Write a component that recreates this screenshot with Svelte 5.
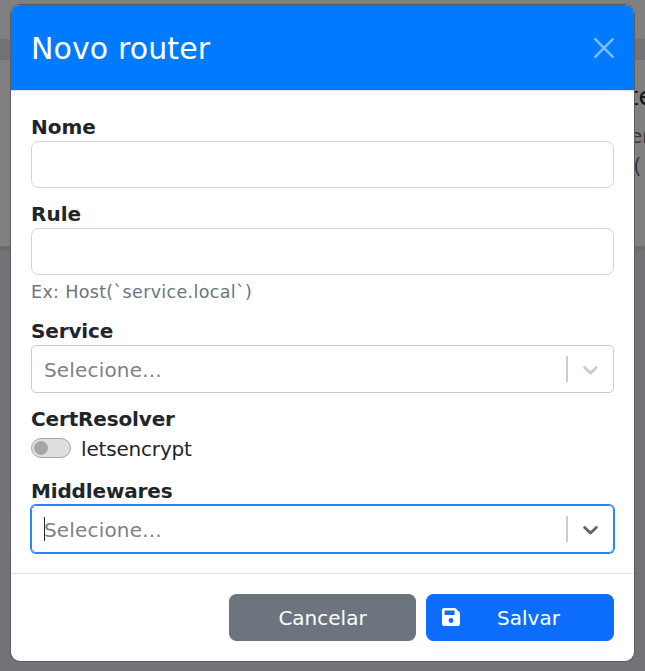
<script>
  let nome = $state('');
  let rule = $state('');
</script>

{#snippet chevron()}
  <svg class="chevron" width="25" height="25" viewBox="0 0 20 20" aria-hidden="true">
    <path fill="currentColor" d="M4.516 7.548c0.436-0.446 1.043-0.481 1.576 0l3.908 3.747 3.908-3.747c0.533-0.481 1.141-0.446 1.574 0 0.436 0.445 0.408 1.197 0 1.615-0.406 0.418-4.695 4.502-4.695 4.502-0.217 0.223-0.502 0.335-0.787 0.335s-0.57-0.112-0.789-0.335c0 0-4.287-4.084-4.695-4.502s-0.436-1.170 0-1.615z" />
  </svg>
{/snippet}

<div class="page">
  <div class="navbar"></div>
  <div class="card">
    <span class="behind title">te</span>
    <span class="behind sub">er</span>
    <span class="behind paren">(</span>
  </div>

  <div class="modal" role="dialog" aria-label="Novo router">
    <header>
      <h5>Novo router</h5>
      <button class="close" aria-label="Fechar">
        <svg width="20" height="20" viewBox="0 0 20 20"><path d="M1.200 1.200 18.800 18.800M18.800 1.200 1.200 18.800" stroke="#fff" stroke-width="2.500" stroke-linecap="round" /></svg>
      </button>
    </header>

    <main>
      <div class="group">
        <label for="nome">Nome</label>
        <input id="nome" type="text" bind:value={nome} />
      </div>
      <div class="group rule-group">
        <label for="rule">Rule</label>
        <input id="rule" type="text" bind:value={rule} />
        <small>Ex: Host(`service.local`)</small>
      </div>
      <div class="group service-group">
        <div class="label tight">Service</div>
        <div class="select">
          <span class="placeholder">Selecione...</span>
          <i></i>
          {@render chevron()}
        </div>
      </div>
      <div class="group cert-group">
        <div class="label tight">CertResolver</div>
        <div class="check"><span class="switch"></span><span class="lets">letsencrypt</span></div>
      </div>
      <div class="group">
        <div class="label tight">Middlewares</div>
        <div class="select focused">
          <b class="caret"></b>
          <span class="placeholder">Selecione...</span>
          <i></i>
          {@render chevron()}
        </div>
      </div>
    </main>

    <footer>
      <button class="btn cancel">Cancelar</button>
      <button class="btn save">
        <svg width="18" height="18" viewBox="0 0 19 19" aria-hidden="true"><path fill="#fff" fill-rule="evenodd" d="M2.200 0H14l5 5v11.800a2.200 2.200 0 0 1-2.200 2.200H2.200A2.200 2.200 0 0 1 0 16.800V2.200A2.200 2.200 0 0 1 2.200 0ZM2.700 2.700v4.800h10.600V2.700ZM9.500 10.600a2.600 2.600 0 1 0 0 5.200 2.600 2.600 0 0 0 0-5.200Z" /></svg>
        <span>Salvar</span>
      </button>
    </footer>
  </div>
</div>

<style>
  * { box-sizing: border-box; }
  .page {
    position: relative;
    width: 645px;
    height: 671px;
    overflow: hidden;
    background: #727277;
    font: 20px/30px "DejaVu Sans", Verdana, sans-serif;
    color: #212529;
  }
  .navbar { height: 39px; background: #808080; }
  .card {
    position: relative;
    height: 188px;
    margin-top: 20px;
    background: #808080;
    border: solid #707070;
    border-width: 1px 0;
    box-shadow: 0 2px 4px rgba(0, 0, 0, .12);
  }
  .behind { position: absolute; line-height: 30px; }
  .title { left: 629px; top: 22px; font-size: 24px; color: #111315; }
  .sub { left: 630px; top: 61px; font-size: 20px; color: #363a3e; }
  .paren { left: 633px; top: 91px; font-size: 22px; color: #363a3e; }
  .modal {
    position: absolute;
    left: 11px;
    top: 5px;
    width: 623px;
    height: 656px;
    display: flex;
    flex-direction: column;
    overflow: hidden;
    background: #fff;
    border-radius: 9px;
    box-shadow: 0 0 0 1px #5c5c60;
  }
  header {
    height: 86px;
    display: flex;
    align-items: center;
    justify-content: space-between;
    padding: 0 20px;
    background: #007bff;
    border-bottom: 1px solid #dee2e6;
  }
  h5 { margin: 0; padding-top: 2px; font-size: 30px; font-weight: 400; letter-spacing: .1px; color: #fff; }
  button { border: 0; font: inherit; color: #fff; }
  .close { display: flex; padding: 0; background: none; opacity: .5; }
  main { height: 482px; padding: 20px 20px 0; }
  .group { height: 87px; }
  .rule-group { height: 117px; }
  .service-group { height: 88px; }
  .cert-group { height: 72px; }
  label, .label { display: block; height: 30px; padding-top: 1px; font-weight: 700; }
  .tight { letter-spacing: -.150px; }
  input {
    display: block;
    width: 583px;
    height: 47px;
    border: 1px solid #ced4da;
    border-radius: 7.500px;
    background: #fff;
    outline: 0;
  }
  small { display: block; margin-top: 4px; font-size: 17.500px; line-height: 26px; letter-spacing: .330px; color: #6c757d; }
  .select {
    display: flex;
    align-items: center;
    height: 48px;
    padding: 0 10px 0 12px;
    border: 1px solid #ccc;
    border-radius: 5px;
    color: #ccc;
  }
  .placeholder { flex: 1; padding-top: 1px; letter-spacing: .170px; color: #808080; }
  .select i { width: 2px; height: 26px; margin-right: 10px; background: #ccc; }
  .chevron { display: block; }
  .focused { border-color: #2684ff; box-shadow: 0 0 0 1px #2684ff; color: #666; }
  .caret { width: 1px; height: 24px; margin-right: -1px; background: #212529; }
  .check { display: flex; align-items: center; gap: 10px; height: 30px; }
  .lets { padding-top: 1px; letter-spacing: -.180px; }
  .switch {
    width: 40px;
    height: 20px;
    border: 1px solid #a6a6a6;
    border-radius: 10px;
    background: radial-gradient(circle at 9px 9px, #a6a6a6 6.500px, #dedede 7.200px);
  }
  footer {
    flex: 1;
    display: flex;
    justify-content: flex-end;
    gap: 10px;
    padding: 20px 20px 0;
    border-top: 1px solid #dee2e6;
  }
  .btn { height: 47px; border-radius: 7.500px; }
  .cancel { width: 187px; background: #6c757d; }
  .save { width: 188px; display: flex; align-items: center; padding: 0 17px 0 16px; background: #0d6efd; }
  .save svg { margin-bottom: 2px; }
  .save span { flex: 1; text-align: center; }
</style>
